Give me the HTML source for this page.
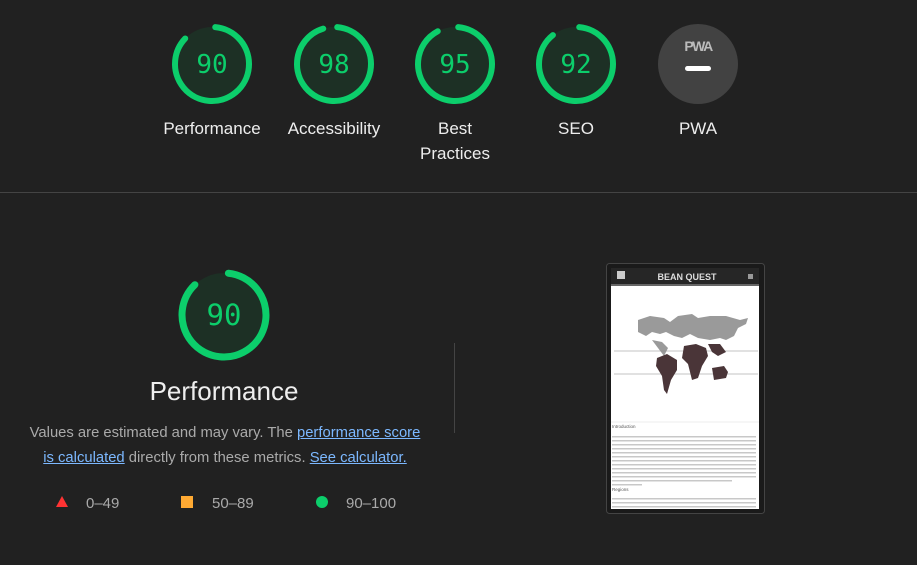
<!DOCTYPE html>
<html><head><meta charset="utf-8"><style>
html,body{margin:0;padding:0;background:#212121;width:917px;height:565px;overflow:hidden;font-family:"Liberation Sans",Arial,sans-serif;}
.lbl{position:absolute;color:#eee;font-size:17px;text-align:center;width:120px;line-height:25px;}
.num{font-family:"DejaVu Sans Mono","Liberation Mono",monospace;fill:#0cce6b;}
a{color:#7cb8ff;text-decoration:underline;}
</style></head><body>
<svg width="917" height="565" style="position:absolute;left:0;top:0">
<g transform="translate(212,64)"><circle r="37" fill="#1d3025"/><circle r="37" fill="none" stroke="#0cce6b" stroke-width="6" stroke-linecap="round" transform="rotate(-85)" stroke-dasharray="199 300"/><text class="num" y="9" text-anchor="middle" font-size="26">90</text></g>
<g transform="translate(334,64)"><circle r="37" fill="#1d3025"/><circle r="37" fill="none" stroke="#0cce6b" stroke-width="6" stroke-linecap="round" transform="rotate(-85)" stroke-dasharray="218 300"/><text class="num" y="9" text-anchor="middle" font-size="26">98</text></g>
<g transform="translate(455,64)"><circle r="37" fill="#1d3025"/><circle r="37" fill="none" stroke="#0cce6b" stroke-width="6" stroke-linecap="round" transform="rotate(-85)" stroke-dasharray="211 300"/><text class="num" y="9" text-anchor="middle" font-size="26">95</text></g>
<g transform="translate(576,64)"><circle r="37" fill="#1d3025"/><circle r="37" fill="none" stroke="#0cce6b" stroke-width="6" stroke-linecap="round" transform="rotate(-85)" stroke-dasharray="204 300"/><text class="num" y="9" text-anchor="middle" font-size="26">92</text></g>
<g transform="translate(698,64)"><circle r="40" fill="#424242"/><text y="-13" text-anchor="middle" font-size="14" font-weight="bold" fill="#bbb" font-family="Liberation Sans,Arial,sans-serif" letter-spacing="-1.5">PWA</text><rect x="-13" y="2" width="26" height="5" rx="2.5" fill="#fff"/></g>
<line x1="0" y1="192.5" x2="917" y2="192.5" stroke="#444" stroke-width="1"/>
<g transform="translate(224,315)"><circle r="42" fill="#1d3025"/><circle r="42" fill="none" stroke="#0cce6b" stroke-width="7" stroke-linecap="round" transform="rotate(-84)" stroke-dasharray="227 300"/><text class="num" y="10" text-anchor="middle" font-size="29">90</text></g>
<line x1="454.5" y1="343" x2="454.5" y2="433" stroke="#444"/>
<polygon points="62,496 68,507 56,507" fill="#ff3333"/>
<rect x="181" y="496" width="12" height="12" fill="#ffaa33"/>
<circle cx="322" cy="502" r="6" fill="#0cce6b"/>
<text x="86" y="508" font-size="15" fill="#aaa" font-family="Liberation Sans,Arial,sans-serif">0–49</text>
<text x="212" y="508" font-size="15" fill="#aaa" font-family="Liberation Sans,Arial,sans-serif">50–89</text>
<text x="346" y="508" font-size="15" fill="#aaa" font-family="Liberation Sans,Arial,sans-serif">90–100</text>
<rect x="606.5" y="263.5" width="158" height="250" rx="3" fill="#1a1a1a" stroke="#444"/>
<rect x="611" y="268" width="148" height="241" fill="#fff"/>
<rect x="611" y="268" width="148" height="16" fill="#262626"/>
<rect x="611" y="284" width="148" height="2" fill="#666"/>
<rect x="617" y="271" width="8" height="8" fill="#ccc"/>
<rect x="748" y="274" width="5" height="5" fill="#999"/>
<text x="687" y="280" text-anchor="middle" font-size="9" font-weight="bold" fill="#ddd" font-family="Liberation Sans,Arial,sans-serif">BEAN QUEST</text>
<path d="M638 320 l12 -4 l14 2 l6 4 l8 -6 l14 -2 l6 4 l12 -2 l16 0 l14 4 l8 -2 l-2 6 l-8 4 l-4 8 l-8 4 l-6 -2 l-10 2 l-12 -2 l-8 -4 l-8 4 l-8 -2 l-8 -4 l-6 2 l-8 -2 l-6 4 l-8 -4 z" fill="#9a9a9a"/>
<path d="M652 340 l10 2 l6 6 l-4 8 z" fill="#9a9a9a"/>
<path d="M614 351 l144 0" stroke="#888" stroke-width="0.6"/>
<path d="M614 374 l144 0" stroke="#888" stroke-width="0.6"/>
<path d="M657 358 l10 -4 l10 6 l0 10 l-6 10 l-4 14 l-3 -4 l-2 -14 l-6 -10 z" fill="#4a3538"/>
<path d="M684 346 l12 -2 l10 4 l2 8 l-6 10 l-4 12 l-6 2 l-4 -16 l-6 -6 z" fill="#4a3538"/>
<path d="M708 344 l12 0 l6 8 l-8 4 l-6 -4 z" fill="#4a3538"/>
<path d="M712 368 l12 -2 l4 6 l-2 6 l-12 2 z" fill="#4a3538"/>
<line x1="611" y1="422" x2="759" y2="422" stroke="#ddd" stroke-width="0.6"/>
<text x="612" y="428" font-size="4.5" fill="#555" font-family="Liberation Sans,Arial,sans-serif">Introduction</text>
<g fill="#c8c8c8"><rect x="612" y="436" width="144" height="1.5"/><rect x="612" y="440" width="144" height="1.5"/><rect x="612" y="444" width="144" height="1.5"/><rect x="612" y="448" width="144" height="1.5"/><rect x="612" y="452" width="144" height="1.5"/><rect x="612" y="456" width="144" height="1.5"/><rect x="612" y="460" width="144" height="1.5"/><rect x="612" y="464" width="144" height="1.5"/><rect x="612" y="468" width="144" height="1.5"/><rect x="612" y="472" width="144" height="1.5"/><rect x="612" y="476" width="144" height="1.5"/><rect x="612" y="480" width="120" height="1.5"/><rect x="612" y="484" width="30" height="1.5"/><rect x="612" y="498" width="144" height="1.5"/><rect x="612" y="502" width="144" height="1.5"/><rect x="612" y="506" width="144" height="1.5"/></g>
<text x="612" y="491" font-size="4.5" fill="#555" font-family="Liberation Sans,Arial,sans-serif">Regions</text>
</svg>
<div class="lbl" style="left:152px;top:116px">Performance</div>
<div class="lbl" style="left:274px;top:116px">Accessibility</div>
<div class="lbl" style="left:395px;top:116px">Best<br>Practices</div>
<div class="lbl" style="left:516px;top:116px">SEO</div>
<div class="lbl" style="left:638px;top:116px">PWA</div>
<div style="position:absolute;left:24px;width:400px;top:376px;text-align:center;color:#eee;font-size:26px;">Performance</div>
<div style="position:absolute;left:22px;width:406px;top:421px;text-align:center;color:#aaa;font-size:14.8px;line-height:24.5px;">Values are estimated and may vary. The <a>performance score</a><br><a>is calculated</a> directly from these metrics. <a>See calculator.</a></div>
</body></html>
